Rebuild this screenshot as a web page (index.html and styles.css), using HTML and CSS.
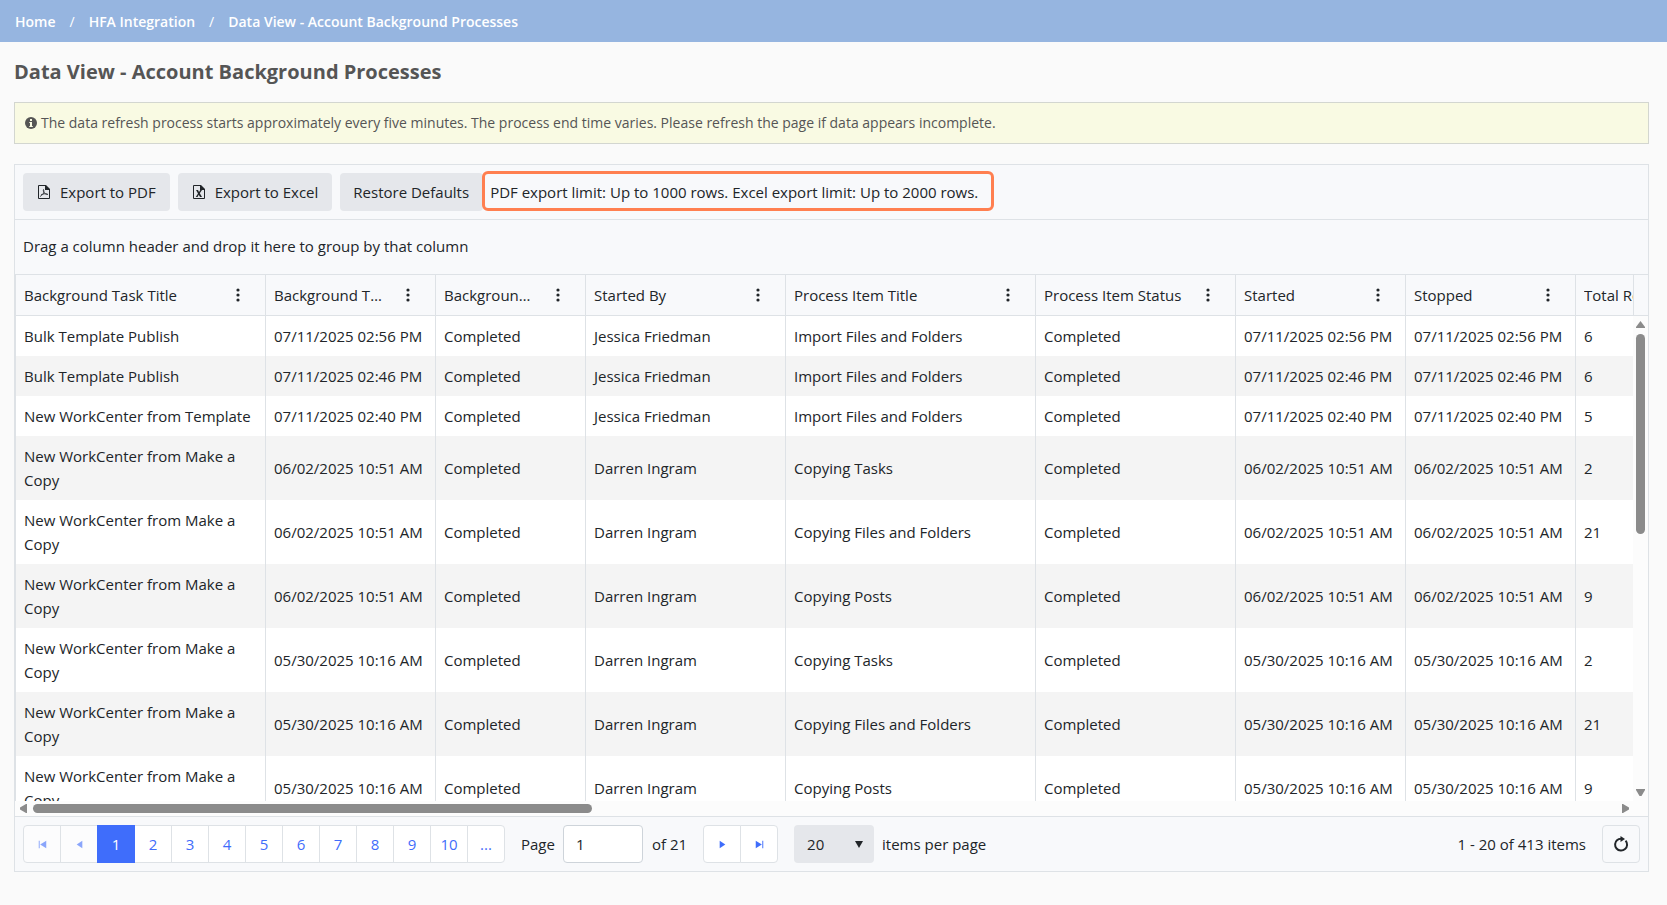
FILE: index.html
```html
<!DOCTYPE html>
<html lang="en">
<head>
  <meta charset="UTF-8">
  <title>Data View - Account Background Processes</title>
  <link rel="stylesheet" href="styles.css">
</head>
<body>
  <nav class="breadcrumb">
    <a href="#">Home</a>
    <span class="sep">/</span>
    <a href="#">HFA Integration</a>
    <span class="sep">/</span>
    <a href="#">Data View - Account Background Processes</a>
  </nav>

  <main class="page">
    <h1>Data View - Account Background Processes</h1>

    <div class="notice">
      <svg class="info-icon" viewBox="0 0 12 12"><circle cx="6" cy="6" r="6"/><path d="M5 2h2v2H5zM4.300 5H7v4h.8v1H4.300V9H5V6h-.7z"/></svg>
      <span>The data refresh process starts approximately every five minutes. The process end time varies. Please refresh the page if data appears incomplete.</span>
    </div>

    <div class="grid">
      <!-- export toolbar -->
      <div class="toolbar">
        <button type="button" class="btn">
          <svg class="icon" viewBox="0 0 16 16"><path class="line" d="M2.500 1.500h7l4 4v9h-11z"/><path d="M9 1h1l4 4v1H9z"/><path class="thin" d="M7.500 5.500c1 3 .5 4.500-3.500 7M7.500 5.500c-.8 2.500 1.500 5 4.500 5M5 10.800c2-1 4-1.300 6.500-.8"/></svg>
          Export to PDF
        </button>
        <button type="button" class="btn">
          <svg class="icon" viewBox="0 0 16 16"><path class="line" d="M2.500 1.500h7l4 4v9h-11z"/><path d="M9 1h1l4 4v1H9z"/><path d="M5 6h2l1 2 1.300-2H11L8.800 9.300 11 13H9l-1.200-2.300L6.500 13H4.800L7 9.500z"/></svg>
          Export to Excel
        </button>
        <button type="button" class="btn">Restore Defaults</button>
        <span class="limit-note">PDF export limit: Up to 1000 rows. Excel export limit: Up to 2000 rows.</span>
      </div>

      <div class="group-bar">Drag a column header and drop it here to group by that column</div>

      <div class="grid-view">
        <div class="table-wrap">
          <table>
            <colgroup>
              <col class="w250"><col class="w170"><col class="w150"><col class="w200"><col class="w250">
              <col class="w200"><col class="w170"><col class="w170"><col class="w170">
            </colgroup>
            <thead>
              <tr id="headRow"></tr>
            </thead>
            <tbody id="rows"></tbody>
          </table>
        </div>
        <div class="vscroll">
          <div class="vscroll-head"></div>
          <div class="vtrack">
            <svg class="arrow" viewBox="0 0 9 9"><path d="M4.500 1L9 7v1H0V7z"/></svg>
            <div class="vthumb"></div>
            <svg class="arrow down" viewBox="0 0 9 9"><path d="M0 1h9v1L5.500 8h-2L0 2z"/></svg>
          </div>
        </div>
      </div>
      <div class="hscroll">
        <svg class="arrow" viewBox="0 0 9 9"><path d="M8 0v9H7L1 5.500v-2L7 0z"/></svg>
        <div class="hthumb"></div>
        <svg class="arrow right" viewBox="0 0 9 9"><path d="M1 0v9h1l6-3.500v-2L2 0z"/></svg>
      </div>

      <div class="pager">
        <div class="pages">
          <button type="button" class="faded" aria-label="First page" disabled><svg viewBox="0 0 16 16"><path d="M4 4h1v8H4zM12 4v8L5.500 8z"/></svg></button>
          <button type="button" class="faded" aria-label="Previous page" disabled><svg viewBox="0 0 16 16"><path d="M11 4v8L5 8z"/></svg></button>
          <button type="button" class="current">1</button>
          <button type="button">2</button>
          <button type="button">3</button>
          <button type="button">4</button>
          <button type="button">5</button>
          <button type="button">6</button>
          <button type="button">7</button>
          <button type="button">8</button>
          <button type="button">9</button>
          <button type="button">10</button>
          <button type="button">...</button>
        </div>
        <div class="page-input">
          <label for="pageNo">Page</label>
          <input type="text" id="pageNo" value="1">
          <span>of 21</span>
        </div>
        <div class="pages">
          <button type="button" aria-label="Next page"><svg viewBox="0 0 16 16"><path d="M5 4v8l6-4z"/></svg></button>
          <button type="button" aria-label="Last page"><svg viewBox="0 0 16 16"><path d="M11 4h1v8h-1zM4 4v8l6.500-4z"/></svg></button>
        </div>
        <div class="page-size">
          <div class="select-box">
            <select id="pageSize">
              <option>20</option>
              <option>50</option>
              <option>100</option>
            </select>
            <svg class="caret" viewBox="0 0 8 7"><path d="M0 0h8L4 7z"/></svg>
          </div>
          <label for="pageSize">items per page</label>
        </div>
        <span class="count">1 - 20 of 413 items</span>
        <button type="button" class="refresh" aria-label="Refresh"><svg viewBox="0 0 16 16"><path class="ring" d="M12.600 4.600A6 6 0 1 1 4.200 4M4 4.200Q5.500 2.800 8 2.800"/><path d="M7.500 0L12 2.900 7.500 6z"/></svg></button>
      </div>
    </div>
  </main>

  <script>
    const columns = ['Background Task Title', 'Background Task Date', 'Background Task Status', 'Started By',
      'Process Item Title', 'Process Item Status', 'Started', 'Stopped', 'Total Records'];

    // task title, date, started by, process item, total
    const data = [
      ['Bulk Template Publish', '07/11/2025 02:56 PM', 'Jessica Friedman', 'Import Files and Folders', 6],
      ['Bulk Template Publish', '07/11/2025 02:46 PM', 'Jessica Friedman', 'Import Files and Folders', 6],
      ['New WorkCenter from Template', '07/11/2025 02:40 PM', 'Jessica Friedman', 'Import Files and Folders', 5],
      ['New WorkCenter from Make a Copy', '06/02/2025 10:51 AM', 'Darren Ingram', 'Copying Tasks', 2],
      ['New WorkCenter from Make a Copy', '06/02/2025 10:51 AM', 'Darren Ingram', 'Copying Files and Folders', 21],
      ['New WorkCenter from Make a Copy', '06/02/2025 10:51 AM', 'Darren Ingram', 'Copying Posts', 9],
      ['New WorkCenter from Make a Copy', '05/30/2025 10:16 AM', 'Darren Ingram', 'Copying Tasks', 2],
      ['New WorkCenter from Make a Copy', '05/30/2025 10:16 AM', 'Darren Ingram', 'Copying Files and Folders', 21],
      ['New WorkCenter from Make a Copy', '05/30/2025 10:16 AM', 'Darren Ingram', 'Copying Posts', 9]
    ];

    const dots = '<svg viewBox="0 0 16 16"><circle cx="8" cy="3" r="1.600"/><circle cx="8" cy="8" r="1.600"/><circle cx="8" cy="13" r="1.600"/></svg>';

    document.getElementById('headRow').innerHTML = columns.map(name =>
      `<th scope="col"><div class="th-inner"><span class="th-title">${name}</span><button type="button" class="col-menu" aria-label="${name} menu">${dots}</button></div></th>`
    ).join('');

    document.getElementById('rows').innerHTML = data.map(([task, date, user, item, total]) => {
      const cells = [task, date, 'Completed', user, item, 'Completed', date, date, total];
      return '<tr>' + cells.map(c => `<td>${c}</td>`).join('') + '</tr>';
    }).join('');
  </script>
</body>
</html>
```
FILE: styles.css
```css
:root {
  --border: #dee2e6;
  --panel: #f8f9fb;
  --link: #3f6dfb;
  --text: #212529;
  --thumb: #8b8b8b;
}
* {
  box-sizing: border-box;
}
body {
  margin: 0;
  background: #fafafa;
  color: var(--text);
  font-family: "Open Sans", "Noto Sans", sans-serif;
  font-size: 15px;
  line-height: 24px;
}
button, input, select {
  font: inherit;
  color: inherit;
}
svg {
  display: block;
  flex: none;
  fill: currentColor;
}
/* Breadcrumb bar */
.breadcrumb {
  display: flex;
  align-items: center;
  gap: 14px;
  height: 42px;
  padding: 2px 15px 0;
  background: #96b5e0;
  color: #fff;
  font-size: 14px;
}
.breadcrumb a {
  color: inherit;
  font-weight: 600;
  text-decoration: none;
}
.page {
  padding: 0 18px 0 14px;
}
h1 {
  margin: 0;
  padding: 16px 0;
  font-size: 20px;
  line-height: 28px;
  font-weight: 700;
  color: #555;
}
/* Info strip */
.notice {
  display: flex;
  align-items: center;
  gap: 4px;
  height: 42px;
  margin-bottom: 20px;
  padding: 0 10px;
  border: 1px solid #d3d6d0;
  background: #f9fae3;
  color: #555;
  font-size: 14px;
}
.info-icon {
  width: 12px;
  height: 12px;
}
.info-icon path {
  fill: #f9fae3;
}
/* Grid */
.grid {
  border: 1px solid var(--border);
  background: #fff;
}
.toolbar {
  display: flex;
  align-items: center;
  gap: 8px;
  padding: 8px;
  border-bottom: 1px solid var(--border);
  background: var(--panel);
}
.btn {
  display: flex;
  align-items: center;
  gap: 8px;
  height: 38px;
  padding: 0 14px 0 13px;
  border: 0;
  border-radius: 4px;
  background: #e5e7eb;
  cursor: pointer;
}
.icon {
  width: 16px;
  height: 16px;
}
.icon .line {
  fill: none;
  stroke: currentColor;
}
.icon .thin {
  fill: none;
  stroke: currentColor;
  stroke-width: 0.8;
}
.limit-note {
  margin: -2px 0 0 -9px;
  padding: 6px 13px 4px 5px;
  border: 3px solid #ff7f50;
  border-radius: 6px;
  background: var(--panel);
}
.group-bar {
  padding: 14px 8px 16px;
  border-bottom: 1px solid var(--border);
  background: var(--panel);
}
.grid-view {
  display: flex;
  height: 526px;
}
.table-wrap {
  flex: 1;
  min-width: 0;
  overflow: hidden;
}
table {
  width: 1730px;
  table-layout: fixed;
  border-collapse: separate;
  border-spacing: 0;
}
.w150 { width: 150px; }
.w170 { width: 170px; }
.w200 { width: 200px; }
.w250 { width: 250px; }
th, td {
  border-left: 1px solid var(--border);
  text-align: left;
  font-weight: 400;
}
th {
  padding: 0;
  border-bottom: 1px solid var(--border);
  background: var(--panel);
}
td {
  padding: 8px;
}
tbody tr:nth-child(even) {
  background: #f4f4f4;
}
.th-inner {
  display: flex;
  align-items: center;
  gap: 8px;
  height: 40px;
  padding: 0 11px 0 8px;
}
.th-title {
  flex: 1;
  overflow: hidden;
  white-space: nowrap;
  text-overflow: ellipsis;
}
.col-menu {
  flex: none;
  width: 32px;
  padding: 8px;
  border: 0;
  background: none;
  cursor: pointer;
}
/* Scroll bars */
.vscroll {
  display: flex;
  flex-direction: column;
  width: 15px;
}
.vscroll-head {
  height: 41px;
  border-left: 1px solid var(--border);
  border-bottom: 1px solid var(--border);
  background: var(--panel);
}
.vtrack {
  flex: 1;
  display: flex;
  flex-direction: column;
  align-items: center;
  gap: 5px;
  padding: 4px 0;
  background: #fcfcfc;
}
.vthumb {
  width: 9px;
  height: 200px;
  border-radius: 5px;
  background: var(--thumb);
}
.hscroll {
  display: flex;
  align-items: center;
  gap: 5px;
  height: 15px;
  padding: 0 18px 0 4px;
  background: #fcfcfc;
}
.hthumb {
  width: 34.7%;
  height: 9px;
  border-radius: 5px;
  background: var(--thumb);
}
.arrow {
  width: 9px;
  height: 9px;
  fill: var(--thumb);
}
.arrow.down {
  margin-top: auto;
}
.arrow.right {
  margin-left: auto;
}
/* Pager */
.pager {
  display: flex;
  align-items: center;
  gap: 16px;
  padding: 8px;
  border-top: 1px solid var(--border);
  background: var(--panel);
}
.pages {
  display: flex;
  padding-left: 1px;
}
.pages button {
  display: flex;
  align-items: center;
  justify-content: center;
  width: 38px;
  height: 38px;
  margin-left: -1px;
  padding: 0;
  border: 1px solid var(--border);
  background: #fff;
  color: var(--link);
  cursor: pointer;
}
.pages button:first-child {
  border-radius: 4px 0 0 4px;
}
.pages button:last-child {
  border-radius: 0 4px 4px 0;
}
.pages .current {
  z-index: 1;
  border-color: var(--link);
  background: var(--link);
  color: #fff;
}
.pages .faded {
  background: #fcfcfd;
}
.pages .faded svg {
  opacity: 0.6;
}
.pages svg {
  width: 15px;
  height: 15px;
}
.refresh svg, .col-menu svg {
  width: 16px;
  height: 16px;
}
.page-input, .page-size {
  display: flex;
  align-items: center;
  gap: 8px;
}
.page-input span {
  padding-left: 1px;
}
.page-input input {
  width: 80px;
  height: 38px;
  padding: 0 12px;
  border: 1px solid #ced4da;
  border-radius: 4px;
  background: #fff;
}
.select-box {
  position: relative;
}
.select-box select {
  display: block;
  width: 80px;
  height: 38px;
  padding: 0 13px;
  border: 0;
  border-radius: 4px;
  background: #e5e7eb;
  appearance: none;
}
.caret {
  position: absolute;
  top: 16px;
  right: 11px;
  width: 8px;
  height: 7px;
  pointer-events: none;
}
.count {
  margin-left: auto;
}
.refresh {
  width: 38px;
  height: 38px;
  padding: 0 10px;
  border: 1px solid var(--border);
  border-radius: 4px;
  background: var(--panel);
  cursor: pointer;
}
.refresh .ring {
  fill: none;
  stroke: currentColor;
  stroke-width: 2;
}
```
